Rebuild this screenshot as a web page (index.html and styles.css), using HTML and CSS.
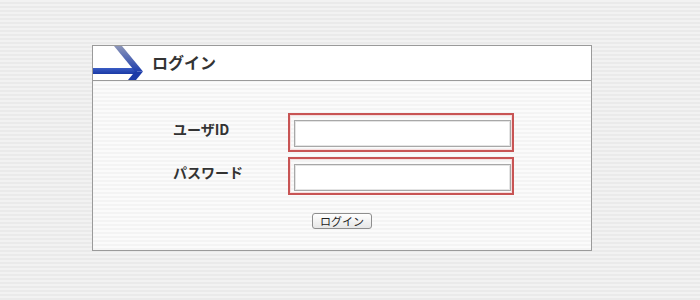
FILE: index.html
```html
<!DOCTYPE html>
<html lang="ja">
<head>
<meta charset="utf-8">
<title>ログイン</title>
<link rel="stylesheet" href="styles.css">
</head>
<body>
<div class="panel">
  <div class="panel-head">
    <svg class="arrow" width="50" height="34" viewBox="0 0 50 34">
      <defs>
        <linearGradient id="up" x1="0" y1="0" x2="0" y2="1">
          <stop offset="0" stop-color="#8a94b8"/>
          <stop offset="1" stop-color="#1f3fae"/>
        </linearGradient>
        <linearGradient id="bar" x1="0" y1="0" x2="0" y2="1">
          <stop offset="0" stop-color="#3a5cc4"/>
          <stop offset="1" stop-color="#1a3aa6"/>
        </linearGradient>
      </defs>
      <rect x="0" y="22" width="44" height="6" fill="url(#bar)"/>
      <polygon points="21,0 29,0 50,25.5 42,25.5" fill="url(#up)"/>
      <polygon points="42,25.5 50,25.5 43,34 35,34" fill="#1a3aa8"/>
    </svg>
    <h1 class="title">ログイン</h1>
  </div>
  <div class="panel-body">
    <div class="form-grid">
      <label class="label" for="uid">ユーザID</label>
      <div class="field"><input id="uid" class="input" type="text"></div>
      <label class="label" for="pw">パスワード</label>
      <div class="field"><input id="pw" class="input" type="password"></div>
    </div>
    <div class="actions">
      <button class="btn" type="button">ログイン</button>
    </div>
  </div>
</div>
</body>
</html>
```

FILE: styles.css
```css
html, body {
  margin: 0;
  padding: 0;
}
body {
  width: 700px;
  height: 300px;
  overflow: hidden;
  background: repeating-linear-gradient(to bottom, #f2f2f2 0, #f2f2f2 2px, #eaeaea 2px, #eaeaea 4px);
  font-family: "Noto Sans CJK JP", "DejaVu Sans", sans-serif;
  padding-top: 45px;
  box-sizing: border-box;
}
.panel {
  margin-left: 92px;
  width: 500px;
  height: 206px;
  box-sizing: border-box;
  border: 1px solid #9a9a9a;
  background: repeating-linear-gradient(to bottom, #fbfbfb 0, #fbfbfb 2px, #f4f4f4 2px, #f4f4f4 4px);
  display: flex;
  flex-direction: column;
}
.panel-head {
  height: 34px;
  background: #fff;
  border-bottom: 1px solid #9a9a9a;
  display: flex;
  align-items: center;
}
.arrow {
  display: block;
  flex: none;
}
.title {
  margin: 0 0 0 9px;
  font-size: 16px;
  font-weight: bold;
  color: #333;
  line-height: 1;
  padding-bottom: 2px;
}
.panel-body {
  padding: 32px 0 0 0;
}
.form-grid {
  display: grid;
  grid-template-columns: 115px 226px;
  row-gap: 5px;
  padding-left: 80px;
}
.label {
  font-size: 14px;
  font-weight: bold;
  color: #333;
  align-self: center;
  padding-bottom: 8px;
}
.field {
  height: 39px;
  box-sizing: border-box;
  border: 2px solid #c85454;
  box-shadow: inset 0 0 0 1px #f6dede;
  padding: 5px 1px 3px 4px;
  display: flex;
}
.field + .label + .field {
  height: 38px;
}
.input {
  width: 217px;
  height: 27px;
  box-sizing: border-box;
  border: 1px solid #a8a8a8;
  box-shadow: inset 0 0 0 1px #e4e4e4;
  background: #fff;
  margin: 0;
  padding: 0 4px;
  outline: none;
}
.actions {
  display: flex;
  justify-content: center;
  padding-top: 18px;
}
.btn {
  width: 60px;
  height: 16px;
  box-sizing: border-box;
  padding: 0;
  margin: 0;
  font-family: "Noto Sans CJK JP", sans-serif;
  font-size: 11px;
  line-height: 14px;
  color: #222;
  border: 1px solid #8e8e8e;
  border-radius: 3px;
  background: linear-gradient(to bottom, #ffffff, #e6e6e6);
}
```
